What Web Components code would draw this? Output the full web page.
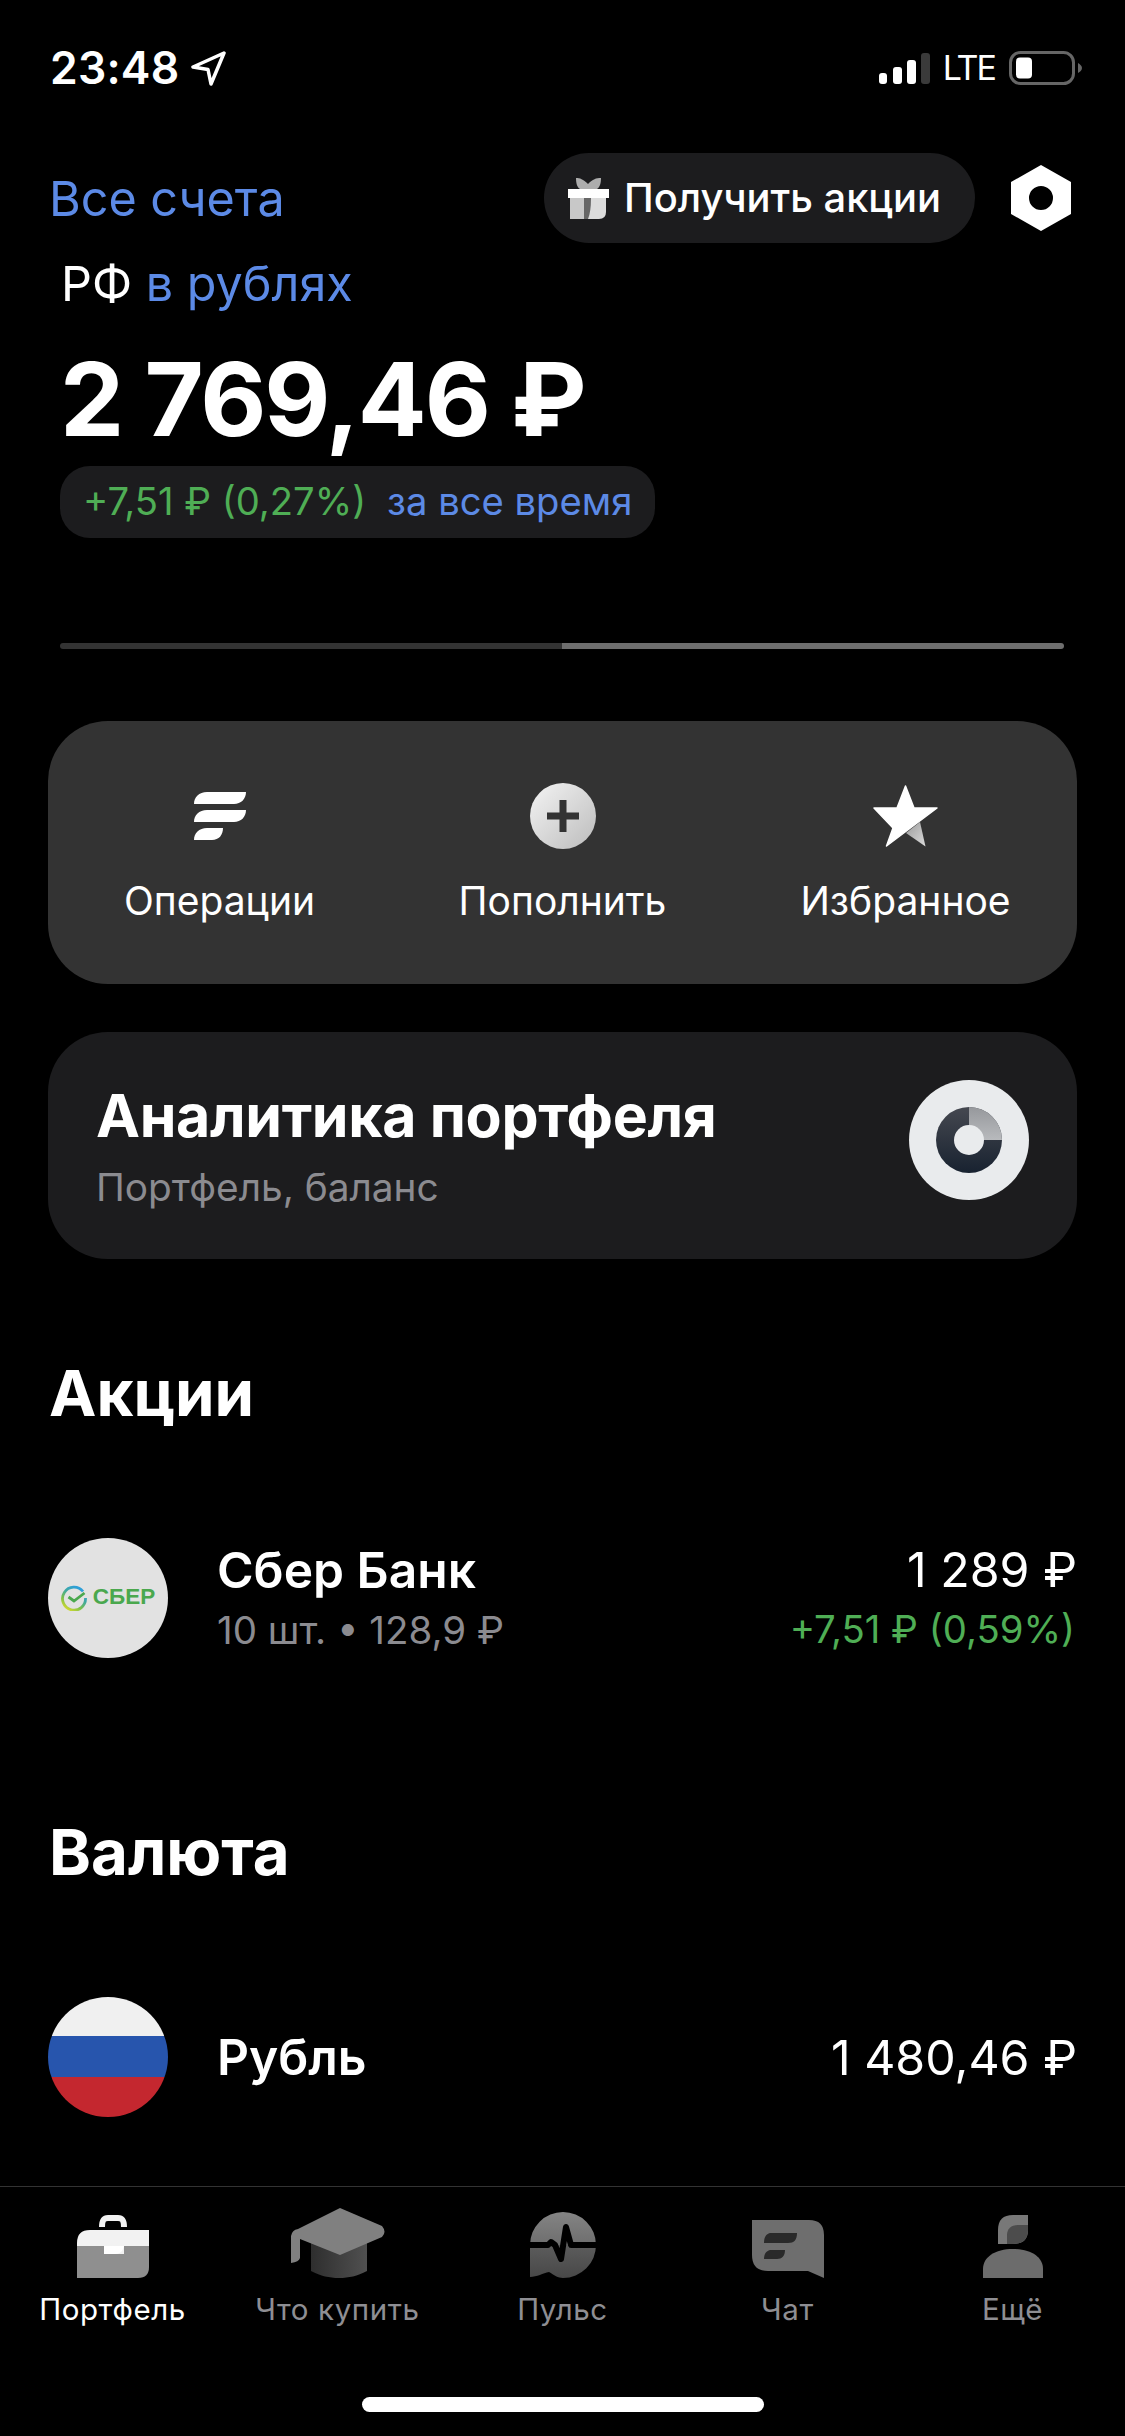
<!DOCTYPE html>
<html lang="ru"><head><meta charset="utf-8"><title>Портфель</title>
<style>
html,body{margin:0;padding:0;background:#000;}
body{width:1125px;height:2436px;overflow:hidden;font-family:Inter,"Noto Sans",sans-serif;color:#fff;}
x-app{display:flex;flex-direction:column;width:1125px;height:2436px;}
</style></head><body>
<x-app>
  <x-status></x-status>
  <x-header></x-header>
  <x-balance></x-balance>
  <x-actions>
    <x-action label="Операции" icon="ops"></x-action>
    <x-action label="Пополнить" icon="plus"></x-action>
    <x-action label="Избранное" icon="star"></x-action>
  </x-actions>
  <x-analytics></x-analytics>
  <x-section title="Акции" style="--top:102px">
    <x-row icon="sber" name="Сбер Банк" sub="10 шт. • 128,9 ₽" value="1 289 ₽" delta="+7,51 ₽ (0,59%)"></x-row>
  </x-section>
  <x-section title="Валюта" style="--top:162px">
    <x-row icon="flag" name="Рубль" value="1 480,46 ₽"></x-row>
  </x-section>
  <x-tabbar>
    <x-tab label="Портфель" icon="case" active></x-tab>
    <x-tab label="Что купить" icon="cap"></x-tab>
    <x-tab label="Пульс" icon="pulse"></x-tab>
    <x-tab label="Чат" icon="chat"></x-tab>
    <x-tab label="Ещё" icon="more"></x-tab>
  </x-tabbar>
</x-app>
<script>
const ICONS={
ops:`<svg width="52" height="48" viewBox="0 0 52 48"><path fill="#fff" d="M13 0H52C52 7 47 12 40 12H0C0 5 5 0 13 0ZM13 18H52C52 25 47 30 40 30H0C0 23 5 18 13 18ZM13 36H29C29 43 25 48 18 48H0C0 41 5 36 13 36Z"/></svg>`,
plus:`<svg width="66" height="66" viewBox="0 0 66 66"><defs><linearGradient id="pg" x1="0" y1="0" x2="1" y2="1"><stop offset="0" stop-color="#f4f4f4"/><stop offset="1" stop-color="#bcbcbc"/></linearGradient></defs><circle cx="33" cy="33" r="33" fill="url(#pg)"/><path fill="#333" d="M29.500 17h7v12.500h12.500v7H36.500v12.500h-7V36.500H17v-7h12.500z"/></svg>`,
star:`<svg width="65" height="62" viewBox="0 0 65 62"><defs><linearGradient id="sg" x1="0" y1="0" x2="1" y2="1"><stop offset="0" stop-color="#9a9a9a"/><stop offset="1" stop-color="#dcdcdc"/></linearGradient></defs><path fill="url(#sg)" d="M33 48 47 37 52.500 61.500z"/><path fill="#fff" stroke="#fff" stroke-width="1.500" stroke-linejoin="round" d="M32.500 1 41 23H64L13.500 61 20 43 1 23H24Z"/></svg>`,
case:`<svg width="72" height="63" viewBox="0 0 72 63"><path fill="#8f8f8f" d="M0 30H72V52Q72 63 61 63H0Z"/><path fill="#f2f2f2" d="M13 15H72V31H47V39H27V31H0V28Q0 15 13 15Z"/><path fill="#fff" d="M27 31H47C46 36 43 39 38 39H27Z"/><path fill="none" stroke="#f2f2f2" stroke-width="6" d="M25 12C25 6 26 3 31 3H41C46 3 47 6 47 12"/></svg>`,
cap:`<svg width="94" height="70" viewBox="0 0 94 70"><defs><linearGradient id="cg" x1="0" y1="0" x2="1" y2="0"><stop offset="0" stop-color="#2e2e2e"/><stop offset="1" stop-color="#505050"/></linearGradient></defs><path fill="url(#cg)" d="M20 34H76V63C66 68 58 70 48 70S30 68 20 63Z"/><path fill="#808080" d="M49 0 91 18Q96 24 91 29L49 47 9 31V50Q8 54 0 55V28Q1 22 7 21Z"/></svg>`,
pulse:`<svg width="66" height="66" viewBox="0 0 66 66"><defs><linearGradient id="pu" x1="0" y1="0" x2="0" y2="1"><stop offset="0" stop-color="#848484"/><stop offset=".5" stop-color="#6e6e6e"/><stop offset=".5" stop-color="#5c5c5c"/><stop offset="1" stop-color="#484848"/></linearGradient></defs><path fill="url(#pu)" d="M33 0A33 33 0 0 1 33 66C28 66 24 63 19 60 13 61 7 65 0 65V33A33 33 0 0 1 33 0Z"/><path fill="none" stroke="#000" stroke-width="6" stroke-linejoin="round" d="M0 33H18L21 30 25 33 31 47 36 15 41 33H66"/></svg>`,
chat:`<svg width="72" height="58" viewBox="0 0 72 58"><path fill="#6e6e6e" d="M0 0H57Q72 0 72 15V58L56 51H16Q0 51 0 35Z"/><path fill="#2a2a2a" d="M18 13H45C45 20 42 23 36 23H12C12 17 14 14 18 13ZM18 30H33C33 36 30 39 25 39H12C12 34 14 31 18 30Z"/></svg>`,
more:`<svg width="60" height="63" viewBox="0 0 60 63"><path fill="#6c6c6c" d="M30 34C48 34 60 42 60 54V63H0V54C0 42 12 34 30 34Z"/><path fill="#787878" d="M30 0H45V15C45 25 39 29 30 29H15V15C15 5 20 0 30 0Z"/><path fill="#4c4c4c" d="M45 10V15C45 25 39 29 30 29H24V20C24 14 28 10 35 10Z"/></svg>`,
gift:`<svg width="41" height="41" viewBox="0 0 41 41"><path fill="#adadad" d="M8 0C12 0 15 1 20 6 25 1 28 0 33 0 33 5 32 9 29 11H12C9 9 8 5 8 0Z"/><rect y="11" width="41" height="9" fill="#fff"/><path fill="#c8c8c8" d="M2 20H16V41H2Z"/><path fill="#666" d="M16 20H23V41H16Z"/><path fill="#dcdcdc" d="M23 20H38V34Q38 41 31 41H20Q23 34 23 20Z"/></svg>`,
sber:`<svg width="120" height="120" viewBox="0 0 120 120"><circle cx="60" cy="60" r="60" fill="#e2e2e2"/></svg>`,
flag:`<svg width="120" height="120" viewBox="0 0 120 120"><defs><clipPath id="fc"><circle cx="60" cy="60" r="60"/></clipPath></defs><g clip-path="url(#fc)"><rect width="120" height="39" fill="#f0f0f0"/><rect y="39" width="120" height="41" fill="#2755ad"/><rect y="80" width="120" height="40" fill="#c4272f"/></g></svg>`
};
function def(name,html){
  customElements.define(name,class extends HTMLElement{
    connectedCallback(){
      if(this.shadowRoot)return;
      const r=this.attachShadow({mode:'open'});
      r.innerHTML=typeof html==='function'?html(this):html;
    }
  });
}
def('x-app','<style>:host{display:flex;flex-direction:column}</style><slot></slot>');
def('x-status',`<style>
:host{display:flex;justify-content:space-between;align-items:center;height:136px;box-sizing:border-box;padding:0 43px 0 50px;}
.l,.r{display:flex;align-items:center;}
.t{font:600 44.500px/1 Inter,sans-serif;letter-spacing:.2px;color:#fff}
.l svg{margin-left:12px}
.lte{font:400 34px/1 Inter,sans-serif;letter-spacing:-2px;color:#fff;margin:0 14px 0 13px}
</style>
<div class="l"><span class="t">23:48</span><svg width="36" height="35" viewBox="0 0 36 35"><path fill="none" stroke="#fff" stroke-width="3.500" stroke-linejoin="round" d="M33 2 2 16 17 18.500 20 33Z"/></svg></div>
<div class="r"><svg width="51" height="31" viewBox="0 0 51 31"><g fill="#fff"><rect y="20" width="8" height="11" rx="3"/><rect x="14" y="14" width="9" height="17" rx="3"/><rect x="28" y="7" width="9" height="24" rx="3"/></g><rect x="42" width="9" height="31" rx="3" fill="#3a3a3a"/></svg><span class="lte">LTE</span>
<svg width="73" height="34" viewBox="0 0 73 34"><rect x="1.500" y="1.500" width="63" height="31" rx="10" fill="none" stroke="#666" stroke-width="3"/><rect x="7" y="6.500" width="16" height="21" rx="4" fill="#fff"/><path d="M69 12c2 1 4 3 4 5s-2 4-4 5z" fill="#666"/></svg></div>`);
def('x-header',`<style>
:host{display:flex;justify-content:space-between;align-items:center;padding:17px 54px 0 49px;height:90px;}
.a{font:400 48.500px/1 Inter,sans-serif;color:#5c8ae6;padding-top:2px}
.rt{display:flex;align-items:center;gap:36px}
.p{display:flex;align-items:center;height:90px;width:431px;box-sizing:border-box;padding:0 0 0 24px;gap:15px;border-radius:45px;background:#1c1c1e;font:500 39.900px/1 Inter,sans-serif;color:#fff;white-space:nowrap}
.p svg{flex:none}
</style><span class="a">Все счета</span><div class="rt"><div class="p">${ICONS.gift}<span>Получить акции</span></div>
<svg width="60" height="66" viewBox="0 0 60 66"><path fill="#fff" fill-rule="evenodd" d="M30 0 60 17V49L30 66 0 49V17ZM30 21a12 12 0 1 0 0 24 12 12 0 0 0 0-24Z"/></svg></div>`);
def('x-balance',`<style>
:host{display:flex;flex-direction:column;align-items:flex-start;padding:0 61px 0 61px;}
.acc{font:400 48.500px/1 Inter,sans-serif;margin-top:17px;color:#fff}
.acc b{font-weight:400;color:#5c8ae6}
.amt{font:700 102px/1 Inter,sans-serif;margin:39px 0 0 -1px;letter-spacing:-2px;color:#fff}
.chip{display:flex;align-items:center;gap:21px;height:72px;box-sizing:border-box;padding:0 23px;margin:16px 0 0 -1px;border-radius:30px;background:#1c1c1e;font:400 38.200px/1 Inter,sans-serif;white-space:nowrap}
.g{color:#4fae55}.b{color:#5c8ae6}
.bar{display:flex;width:1004px;height:6px;margin:105px 0 0 -1px;}
.bar i{flex:1;display:block;background:#333;border-radius:3px 0 0 3px}
.bar i+i{background:#6e6e6e;border-radius:0 3px 3px 0}
</style><div class="acc">РФ <b>в рублях</b></div><div class="amt">2 769,46 ₽</div>
<div class="chip"><span class="g">+7,51 ₽ (0,27%)</span><span class="b">за все время</span></div><div class="bar"><i></i><i></i></div>`);
def('x-actions',`<style>:host{display:grid;grid-template-columns:repeat(3,1fr);margin:72px 48px 0;height:263px;border-radius:60px;background:#333;}</style><slot></slot>`);
def('x-action',h=>`<style>
:host{display:flex;flex-direction:column;align-items:center;}
.i{height:66px;margin-top:62px;display:flex;align-items:center;justify-content:center}
.l{font:400 39px/1 Inter,sans-serif;margin-top:32px;color:#fff;white-space:nowrap}
</style><div class="i">${ICONS[h.getAttribute('icon')]}</div><div class="l">${h.getAttribute('label')}</div>`);
def('x-analytics',`<style>
:host{display:flex;justify-content:space-between;align-items:center;margin:48px 48px 0;height:227px;box-sizing:border-box;padding:0 48px;border-radius:60px;background:#1c1c1e;}
.tx{padding-top:2px}
.t{font:700 59px/1 Inter,sans-serif;color:#fff;letter-spacing:-.35px;white-space:nowrap}
.s{font:400 38.800px/1 Inter,sans-serif;color:#8b8b90;margin-top:23px}
svg{margin-bottom:10px}
</style><div class="tx"><div class="t">Аналитика портфеля</div><div class="s">Портфель, баланс</div></div>
<svg width="120" height="120" viewBox="0 0 120 120"><defs><linearGradient id="dk" x1="0" y1="0" x2="0" y2="1"><stop offset="0" stop-color="#454850"/><stop offset="1" stop-color="#182230"/></linearGradient><linearGradient id="lg" x1="0" y1="0" x2="0" y2="1"><stop offset="0" stop-color="#96989c"/><stop offset="1" stop-color="#b8babd"/></linearGradient></defs><circle cx="60" cy="60" r="60" fill="#e9ebed"/><circle cx="60" cy="60" r="33" fill="url(#dk)"/><path d="M60 27A33 33 0 0 1 93 60H60Z" fill="url(#lg)"/><circle cx="60" cy="60" r="15" fill="#e9ebed"/></svg>`);
def('x-section',h=>`<style>
:host{display:block;margin-top:var(--top);padding:0 48px;}
h2{margin:0 0 0 1px;font:700 63.500px/1 Inter,sans-serif;color:#fff}
</style><h2>${h.getAttribute('title')}</h2><slot></slot>`);
def('x-row',h=>{
 const sub=h.getAttribute('sub'),d=h.getAttribute('delta'),ic=h.getAttribute('icon');
 const logo=ic==='sber'?`<div class="lg"><svg width="26" height="26" viewBox="0 0 26 26"><defs><linearGradient id="sb" x1="0" y1="1" x2=".6" y2="0"><stop offset="0" stop-color="#f0e22a"/><stop offset=".4" stop-color="#7cc04a"/><stop offset=".7" stop-color="#3fa9a0"/><stop offset="1" stop-color="#2f9fd8"/></linearGradient></defs><path d="M22 6.500A11.500 11.500 0 1 0 24.500 13" fill="none" stroke="url(#sb)" stroke-width="2.800"/><path d="M7.500 12l5.500 4 10.500-8" fill="none" stroke="#4aa84e" stroke-width="2.800"/></svg><span>СБЕР</span></div>`:'';
 return `<style>
:host{display:flex;align-items:center;margin-top:113.500px;height:120px;}
.ic{position:relative;flex:none;width:120px;height:120px}
.lg{position:absolute;inset:0;display:flex;align-items:center;justify-content:center;gap:6px;font:700 22.500px/1 "Liberation Sans",sans-serif;color:#4aa84e;box-sizing:border-box}
.m{flex:1;margin-left:49px;min-width:0;padding-top:${sub?0:3}px}
.n{font:600 49.700px/1 Inter,sans-serif;color:#fff;white-space:nowrap}
.s{font:400 38.500px/1 Inter,sans-serif;color:#8b8b90;margin-top:15px;white-space:nowrap}
.v{text-align:right;white-space:nowrap;padding-top:${sub?0:3}px}
.p{font:400 48.300px/1 Inter,sans-serif;color:#fff}
.d{font:400 38.300px/1 Inter,sans-serif;color:#4fae55;margin:15.500px 2px 0 0}
</style><div class="ic">${ICONS[ic]}${logo}</div><div class="m"><div class="n">${h.getAttribute('name')}</div>${sub?`<div class="s">${sub}</div>`:''}</div>
<div class="v"><div class="p">${h.getAttribute('value')}</div>${d?`<div class="d">${d}</div>`:''}</div>`});
def('x-tabbar',`<style>
:host{position:relative;display:grid;grid-template-columns:repeat(5,1fr);margin-top:auto;height:249px;border-top:1px solid #333;box-sizing:content-box}
.home{position:absolute;left:362px;top:210px;width:402px;height:15px;border-radius:8px;background:#fff}
</style><slot></slot><div class="home"></div>`);
def('x-tab',h=>`<style>
:host{display:flex;flex-direction:column;align-items:center;}
.i{height:70px;margin-top:21px;display:flex;align-items:flex-end;justify-content:center}
.l{font:400 29.500px/1 Inter,sans-serif;letter-spacing:.6px;margin-top:17px;color:${h.hasAttribute('active')?'#fff':'#8e8e93'};white-space:nowrap}
</style><div class="i">${ICONS[h.getAttribute('icon')]}</div><div class="l">${h.getAttribute('label')}</div>`);
</script>
</body></html>
